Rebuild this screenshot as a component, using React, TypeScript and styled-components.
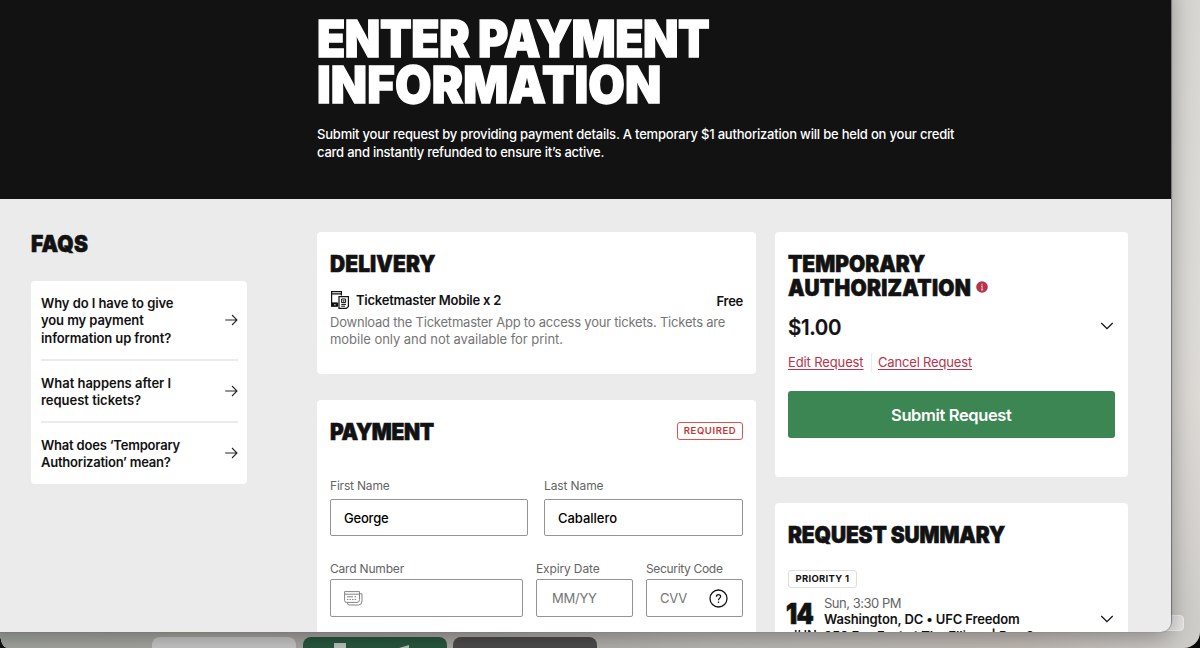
import React from 'react';
import styled, { createGlobalStyle } from 'styled-components';

const GlobalStyle = createGlobalStyle`
  * {
    box-sizing: border-box;
  }
  body {
    margin: 0;
    overflow: hidden;
    font-family: Inter, 'Liberation Sans', sans-serif;
    color: #121212;
  }
  h1, h2, p {
    margin: 0;
  }
`

const Desktop = styled.div`
  position: relative;
  width: 1200px;
  height: 648px;
  overflow: hidden;
  background: linear-gradient(90deg, #a4a7a2 0%, #aaa6a4 35%, #bbbab6 60%, #c4bdb7 85%, #cdcbc8 98%);
`

const SideStrip = styled.div`
  position: absolute;
  top: 0;
  right: 0;
  width: 60px;
  height: 648px;
  background: linear-gradient(180deg, #d8d6d3 0%, #dcdbd8 45%, #dddad6 60%, rgba(208, 205, 202, 0) 100%);
  border-bottom-right-radius: 16px;
  box-shadow: 10px 10px 0 10px #0a0a0a;
  clip-path: inset(0 0 0 30px);
`

const CornerShade = styled.div`
  position: absolute;
  left: 0;
  bottom: 0;
  width: 7px;
  height: 14px;
  background: radial-gradient(ellipse at 100% 0, transparent 68%, #111 72%);
`

const ScrollPill = styled.div`
  position: absolute;
  left: 1150px;
  top: 615px;
  width: 34px;
  height: 16px;
  border: 1px solid #f0f0f0;
  border-radius: 4px;
  background: #e6e5e4;
`

const DockCard = styled.div<{ $left: number; $color: string }>`
  position: absolute;
  left: ${({ $left }) => $left}px;
  top: 637px;
  width: 144px;
  height: 30px;
  border-radius: 8px;
  background: ${({ $color }) => $color};
`

const DockMark = styled.svg`
  position: absolute;
  left: 303px;
  top: 637px;
  z-index: 1;
`

const Window = styled.div`
  position: relative;
  z-index: 1;
  width: 1171px;
  height: 632px;
  overflow: hidden;
  background: #ebebeb;
  border-bottom-right-radius: 10px;
`

const WindowShadow = styled.div`
  position: absolute;
  z-index: 1;
  top: -20px;
  left: -20px;
  width: 1191px;
  height: 651px;
  border-bottom-right-radius: 10px;
  box-shadow: 0 0 1px 1px rgba(0, 0, 0, 0.35), 0 6px 24px rgba(0, 0, 0, 0.35);
`

const Banner = styled.header`
  height: 199px;
  padding: 16px 0 0 317px;
  background: #121212;
  color: #fff;
`

const Title = styled.h1`
  font-size: 51px;
  line-height: 46px;
  font-weight: 900;
  -webkit-text-stroke: 1.4px #fff;
`

const Intro = styled.p`
  margin-top: 18px;
  font-size: 13px;
  line-height: 17.5px;
  font-weight: 500;
`

// $squeeze narrows the glyphs from the left edge, for the condensed headings
const Line = styled.span<{ $track?: number; $squeeze?: number }>`
  display: block;
  white-space: nowrap;
  letter-spacing: ${({ $track = 0 }) => $track}px;
  transform: ${({ $squeeze }) => ($squeeze ? `scaleX(${$squeeze})` : 'none')};
  transform-origin: left center;
`

const Page = styled.main`
  display: flex;
  align-items: flex-start;
  padding: 33px 0 0 31px;
`

const Faqs = styled.aside`
  width: 216px;
  margin-right: 70px;
`

const Column = styled.section<{ $width: number }>`
  display: flex;
  flex-direction: column;
  gap: 26px;
  width: ${({ $width }) => $width}px;

  & + & {
    margin-left: 19px;
  }
`

const Heading = styled.h2`
  font-size: 22.5px;
  line-height: 24px;
  font-weight: 900;
  -webkit-text-stroke: 0.6px #121212;
`

const FaqCard = styled.div`
  margin-top: 25px;
  height: 203px;
  padding: 0 9px 0 10px;
  border-radius: 4px;
  background: #fff;
`

const FaqRow = styled.div<{ $height: number }>`
  display: flex;
  align-items: center;
  justify-content: space-between;
  height: ${({ $height }) => $height}px;

  & + & {
    border-top: 2px solid #ebebeb;
  }
`

const Question = styled.div`
  padding-top: 2px;
  font-size: 13px;
  line-height: 17.5px;
  font-weight: 600;
`

const Card = styled.div<{ $height: number }>`
  height: ${({ $height }) => $height}px;
  padding: 20px 13px 0;
  border-radius: 4px;
  background: #fff;
`

const Between = styled.div<{ $top?: number }>`
  display: flex;
  align-items: center;
  justify-content: space-between;
  margin-top: ${({ $top = 0 }) => $top}px;
`

const DeliveryName = styled.div`
  display: flex;
  align-items: center;
  gap: 6px;
  font-size: 13px;
  line-height: 20px;
  font-weight: 600;
`

const Price = styled.div`
  padding-top: 2px;
  font-size: 13px;
  line-height: 18px;
  font-weight: 600;
`

const Note = styled.p`
  margin-top: 3.5px;
  font-size: 13px;
  line-height: 17.5px;
  color: #757575;
`

const Tag = styled.div<{ $width: number; $color: string; $border: string; $weight: number }>`
  display: flex;
  justify-content: center;
  width: ${({ $width }) => $width}px;
  height: 18px;
  border: 1px solid ${({ $border }) => $border};
  border-radius: 3px;
  font-size: 9.5px;
  line-height: 16px;
  font-weight: ${({ $weight }) => $weight};
  color: ${({ $color }) => $color};
`

const RequiredSlot = styled.div`
  margin-top: -2px;
`

const Fields = styled.div<{ $columns: string; $gap: number; $top: number }>`
  display: grid;
  grid-template-columns: ${({ $columns }) => $columns};
  column-gap: ${({ $gap }) => $gap}px;
  margin-top: ${({ $top }) => $top}px;
`

const Label = styled.label<{ $gap: number }>`
  display: block;
  margin-bottom: ${({ $gap }) => $gap}px;
  font-size: 12px;
  line-height: 16px;
  color: #646464;
`

const InputBox = styled.div<{ $height: number; $pad?: number; $muted?: boolean }>`
  display: flex;
  align-items: center;
  justify-content: space-between;
  height: ${({ $height }) => $height}px;
  padding: 0 14px 0 ${({ $pad = 13 }) => $pad}px;
  border: 1px solid #949494;
  border-radius: 2px;
  font-size: 13px;
  font-weight: ${({ $muted }) => ($muted ? 400 : 500)};
  color: ${({ $muted }) => ($muted ? '#757575' : '#000')};
`

const HeadingRow = styled.div`
  display: flex;
  align-items: center;

  svg {
    margin: -3px 0 0 -9px;
  }
`

const Amount = styled.div`
  font-size: 22px;
  line-height: 28px;
  font-weight: 600;
  -webkit-text-stroke: 0.2px #121212;
`

const Links = styled.div`
  display: flex;
  align-items: center;
  margin-top: 12px;
`

const RequestLink = styled.a`
  font-size: 13px;
  line-height: 19px;
  color: #b5344a;
  text-decoration: underline;
  text-underline-offset: 2px;

  & + & {
    margin-left: 7px;
    padding-left: 6.5px;
    border-left: 1px solid #ebebeb;
  }
`

const Submit = styled.button`
  display: flex;
  align-items: center;
  justify-content: center;
  width: 326.5px;
  height: 47px;
  margin-top: 19px;
  padding: 0;
  border: 0;
  border-radius: 3px;
  background: #3c8654;
  font: 600 16.5px Inter, sans-serif;
  color: #fff;
`

const EventRow = styled.div`
  display: grid;
  grid-template-columns: 36px 1fr 14px;
  margin-top: 7px;
`

const EventDate = styled.div`
  margin-left: -2px;
  padding-top: 8px;
  font-size: 28px;
  line-height: 23px;
  font-weight: 900;
  -webkit-text-stroke: 0.7px #121212;
`

const Month = styled.div`
  padding-left: 2px;
  font-size: 13px;
  line-height: 18px;
  font-weight: 500;
`

const EventText = styled.div`
  font-size: 13px;
  line-height: 16.3px;
  font-weight: 600;
`

const EventTime = styled.div`
  font-weight: 400;
  color: #646464;
`

const ChevronSlot = styled.div<{ $top?: number }>`
  height: 8px;
  margin: ${({ $top = 0 }) => $top}px 1px 0 -1px;
  line-height: 0;
`

const ArrowIcon = () => (
  <svg width="13" height="12" viewBox="0 0 13 12" fill="none" stroke="#262626" strokeWidth="1.1">
    <path d="M0.2 6H12M7 1L12 6L7 11" />
  </svg>
);

const ChevronIcon = () => (
  <svg width="14" height="8" viewBox="0 0 14 8" fill="none" stroke="#121212" strokeWidth="1.3">
    <path d="M1.3 1L7 6.7L12.7 1" />
  </svg>
);

const MobileIcon = () => (
  <svg width="20" height="20" viewBox="0 0 20 20" fill="none" stroke="#121212" strokeWidth="1.2">
    <path d="M7.6 16.2H1.6V1.6H11.4V5.6M1.6 3.8H11.4M1.6 13.2H7.6" />
    <path d="M2 13.4H7.6V16H2Z" fill="#121212" />
    <path d="M4.2 14.8H5.6" stroke="#fff" strokeWidth="1" />
    <path d="M9 6.6H18.4V16.4L16.4 18.4H9Z" />
    <path d="M11.6 9H15.6V12.6H11.6ZM11.2 14.4H16M11.2 16.2H15" strokeWidth="1" />
    <path d="M13 10.3H14.2V11.4H13Z" strokeWidth=".6" />
  </svg>
);

const CardIcon = () => (
  <svg width="19" height="15" viewBox="0 0 19 15" fill="none" stroke="#858585">
    <path d="M.6 .6H15.5V8.6Q15.5 11.4 13 11.4H2.5Q.6 11.4 .6 9.5V.6ZM.6 3.2H15.5" />
    <path d="M15.5 2.8H18V10Q18 14 14.5 14H5.5Q3.4 14 3.4 11.6" />
    <path d="M3 5.8H9M10.5 5.8H12" />
    <path d="M2.8 8.4H13" strokeDasharray="1.6 1" />
  </svg>
);

const HelpIcon = () => (
  <svg width="19" height="19" viewBox="0 0 19 19" fill="none" stroke="#121212" strokeWidth="1.3">
    <circle cx="9.5" cy="9.5" r="8.5" />
    <path d="M7.4 7.8C7.4 5 11.6 5 11.6 7.5C11.6 9.2 9.5 9.1 9.5 11.2" />
    <path d="M9.5 12.5V13.9" />
  </svg>
);

const InfoIcon = () => (
  <svg width="12" height="12" viewBox="0 0 12 12">
    <circle cx="6" cy="6" r="5.8" fill="#b5344a" />
    <path d="M6 2.8V4.2M5 5.4H6.1V8.8M5 8.9H7.2" fill="none" stroke="#e8b9c1" strokeWidth="1.1" />
  </svg>
);

const faqs = [
  { height: 78, lines: [['Why do I have to give', -0.07], ['you my payment', -0.1], ['information up front?', -0.11]] },
  { height: 62, lines: [['What happens after I', -0.02], ['request tickets?', -0.02]] },
  { height: 62, lines: [['What does ‘Temporary', -0.2], ['Authorization’ mean?', -0.22]] },
] as { height: number; lines: [string, number][] }[];

const App = () => {
  return (
    <Desktop>
      <GlobalStyle />
      <SideStrip />
      <ScrollPill />
      <DockCard $left={152} $color="#c8c8c8" />
      <DockCard $left={303} $color="#28573f" />
      <DockCard $left={453} $color="#4d4c4c" />
      <DockMark width="144" height="11">
        <path d="M31 6H43V11H31ZM96 11L106 8V11Z" fill="#b9c4bd" />
      </DockMark>
      <CornerShade />
      <WindowShadow />
      <Window>
        <Banner>
          <Title>
            <Line $track={-0.5} $squeeze={0.905}>ENTER PAYMENT</Line>
            <Line $track={0.15} $squeeze={0.925}>INFORMATION</Line>
          </Title>
          <Intro>
            <Line $track={-0.2}>Submit your request by providing payment details. A temporary $1 authorization will be held on your credit</Line>
            <Line $track={-0.23}>card and instantly refunded to ensure it’s active.</Line>
          </Intro>
        </Banner>
        <Page>
          <Faqs>
            <Heading><Line $track={0.17} $squeeze={0.93}>FAQS</Line></Heading>
            <FaqCard>
              {faqs.map(({ height, lines }) => (
                <FaqRow key={lines[0][0]} $height={height}>
                  <Question>{lines.map(([text, track]) => <Line key={text} $track={track}>{text}</Line>)}</Question>
                  <ArrowIcon />
                </FaqRow>
              ))}
            </FaqCard>
          </Faqs>
          <Column $width={439}>
            <Card $height={142}>
              <Heading><Line $track={0.1} $squeeze={0.93}>DELIVERY</Line></Heading>
              <Between $top={14}>
                <DeliveryName>
                  <MobileIcon />
                  <Line $track={-0.23}>Ticketmaster Mobile x 2</Line>
                </DeliveryName>
                <Price><Line $track={-0.27}>Free</Line></Price>
              </Between>
              <Note>
                <Line $track={-0.22}>Download the Ticketmaster App to access your tickets. Tickets are</Line>
                <Line $track={-0.04}>mobile only and not available for print.</Line>
              </Note>
            </Card>
            <Card $height={300}>
              <Between>
                <Heading><Line $track={-0.4} $squeeze={0.93}>PAYMENT</Line></Heading>
                <RequiredSlot>
                  <Tag $width={66} $weight={600} $color="#c8332f" $border="#d9534f"><Line $track={0.6}>REQUIRED</Line></Tag>
                </RequiredSlot>
              </Between>
              <Fields $columns="198px 198.5px" $gap={16} $top={34}>
                <div>
                  <Label $gap={5}><Line $track={-0.19}>First Name</Line></Label>
                  <InputBox $height={37}><Line $track={-0.2}>George</Line></InputBox>
                </div>
                <div>
                  <Label $gap={5}><Line $track={-0.11}>Last Name</Line></Label>
                  <InputBox $height={37}><Line $track={-0.03}>Caballero</Line></InputBox>
                </div>
              </Fields>
              <Fields $columns="193px 97px 97px" $gap={13} $top={25}>
                <div>
                  <Label $gap={2}><Line $track={-0.19}>Card Number</Line></Label>
                  <InputBox $height={38}><CardIcon /></InputBox>
                </div>
                <div>
                  <Label $gap={2}><Line $track={-0.14}>Expiry Date</Line></Label>
                  <InputBox $height={38} $pad={15} $muted><Line $track={-0.26}>MM/YY</Line></InputBox>
                </div>
                <div>
                  <Label $gap={2}><Line $track={-0.33}>Security Code</Line></Label>
                  <InputBox $height={38} $muted><Line $track={-0.21}>CVV</Line><HelpIcon /></InputBox>
                </div>
              </Fields>
            </Card>
          </Column>
          <Column $width={353}>
            <Card $height={245}>
              <Heading>
                <Line $squeeze={0.93}>TEMPORARY</Line>
                <HeadingRow>
                  <Line $track={0.28} $squeeze={0.93}>AUTHORIZATION</Line>
                  <InfoIcon />
                </HeadingRow>
              </Heading>
              <Between $top={13}>
                <Amount><Line $track={-0.4} $squeeze={0.93}>$1.00</Line></Amount>
                <ChevronSlot $top={-2}><ChevronIcon /></ChevronSlot>
              </Between>
              <Links>
                <RequestLink><Line $track={-0.12}>Edit Request</Line></RequestLink>
                <RequestLink><Line $track={-0.17}>Cancel Request</Line></RequestLink>
              </Links>
              <Submit><Line $track={-0.37}>Submit Request</Line></Submit>
            </Card>
            <Card $height={300}>
              <Heading><Line $track={-0.13} $squeeze={0.93}>REQUEST SUMMARY</Line></Heading>
              <Between $top={23}>
                <Tag $width={69} $weight={700} $color="#121212" $border="#dedede"><Line $track={0.3}>PRIORITY 1</Line></Tag>
              </Between>
              <EventRow>
                <div>
                  <EventDate><Line $track={-0.7} $squeeze={0.88}>14</Line></EventDate>
                  <Month><Line>JUN</Line></Month>
                </div>
                <EventText>
                  <EventTime><Line $track={-0.48}>Sun, 3:30 PM</Line></EventTime>
                  <Line $track={-0.14}>Washington, DC • UFC Freedom</Line>
                  <Line $track={-0.14}>250 Fan Fest at The Ellipse | Day 2</Line>
                </EventText>
                <ChevronSlot $top={20}><ChevronIcon /></ChevronSlot>
              </EventRow>
            </Card>
          </Column>
        </Page>
      </Window>
    </Desktop>
  );
};

export default App;
